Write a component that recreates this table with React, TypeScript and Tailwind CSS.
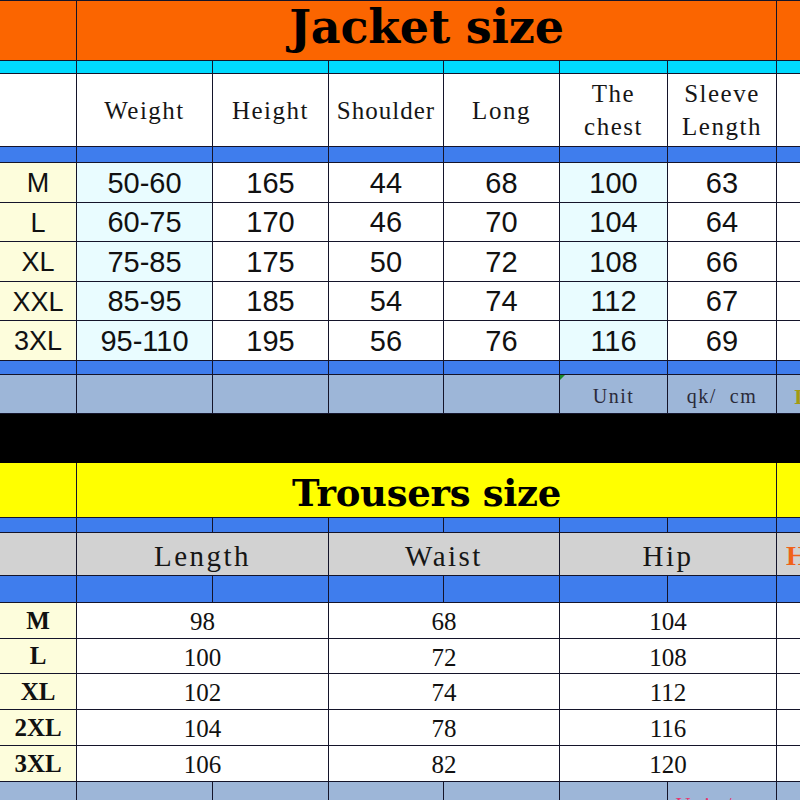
import React from 'react';

type Cell = {
  text?: React.ReactNode;
  span?: number;
  bg: string;
  className?: string;
};

const cols = 'grid grid-cols-[77px_136px_116px_115px_116px_108px_109px_23px]';

// one spreadsheet row, every cell gets a right + bottom rule
function Row({ cells, h }: { cells: Cell[]; h: string }) {
  return (
    <div className={`${cols} ${h}`}>
      {cells.map((c, i) => (
        <div
          key={i}
          className={`${c.bg} ${c.span === 2 ? 'col-span-2' : ''} ${c.span === 6 ? 'col-span-6' : ''} ${
            i === cells.length - 1 ? '' : 'border-r'
          } border-b border-[#14142a] flex items-center justify-center overflow-hidden relative ${c.className ?? ''}`}
        >
          {c.text}
        </div>
      ))}
    </div>
  );
}

const fill = (bg: string): Cell[] => Array.from({ length: 8 }, () => ({ bg }));

const jacket = [
  ['M', '50-60', '165', '44', '68', '100', '63'],
  ['L', '60-75', '170', '46', '70', '104', '64'],
  ['XL', '75-85', '175', '50', '72', '108', '66'],
  ['XXL', '85-95', '185', '54', '74', '112', '67'],
  ['3XL', '95-110', '195', '56', '76', '116', '69'],
];
const jacketHeights = ['h-[40px]', 'h-[39px]', 'h-[40px]', 'h-[39px]', 'h-[40px]'];

const trousers = [
  ['M', '98', '68', '104'],
  ['L', '100', '72', '108'],
  ['XL', '102', '74', '112'],
  ['2XL', '104', '78', '116'],
  ['3XL', '106', '82', '120'],
];
const trouserHeights = ['h-[36px]', 'h-[35px]', 'h-[36px]', 'h-[36px]', 'h-[36px]'];

const sans = "font-['Liberation_Sans',Arial,sans-serif]";
const serif = "font-['Liberation_Serif','Times_New_Roman',serif]";

export default function App() {
  const head = `${serif} text-[25px] tracking-[1.5px] text-[#161616] leading-[33px] text-center`;
  const lightCyan = 'bg-[#e9fcff]';
  const lightYellow = 'bg-[#fdfddc]';

  return (
    <div className="w-[800px] h-[800px] overflow-hidden bg-white border-t border-[#14142a]">
      {/* ---------- Jacket ---------- */}
      <Row
        h="h-[60px]"
        cells={[
          { bg: 'bg-[#fb6500]' },
          {
            bg: 'bg-[#fb6500]',
            span: 6,
            className: 'items-start',
            text: (
              <span className="font-['DejaVu_Serif',serif] font-bold text-[46px] leading-[52px] text-black tracking-[-0.2px]">
                Jacket size
              </span>
            ),
          },
          { bg: 'bg-[#fb6500]' },
        ]}
      />
      <Row h="h-[13px]" cells={fill('bg-[#00daff]')} />
      <Row
        h="h-[73px]"
        cells={[
          { bg: 'bg-white' },
          { bg: 'bg-white', text: <span className={head}>Weight</span> },
          { bg: 'bg-white', text: <span className={head}>Height</span> },
          { bg: 'bg-white', text: <span className={`${head} tracking-[1px]`}>Shoulder</span> },
          { bg: 'bg-white', text: <span className={head}>Long</span> },
          {
            bg: 'bg-white',
            text: (
              <span className={head}>
                The
                <br />
                chest
              </span>
            ),
          },
          {
            bg: 'bg-white',
            text: (
              <span className={head}>
                Sleeve
                <br />
                Length
              </span>
            ),
          },
          { bg: 'bg-white' },
        ]}
      />
      <Row h="h-[16px]" cells={fill('bg-[#3f7ded]')} />
      {jacket.map((r, ri) => (
        <Row
          key={r[0]}
          h={jacketHeights[ri]}
          cells={[
            { bg: lightYellow, text: <span className={`${sans} text-[27px] text-[#111] pt-[2px]`}>{r[0]}</span> },
            ...r.slice(1).map((v, i) => ({
              bg: i === 0 || i === 4 ? lightCyan : 'bg-white',
              text: <span className={`${sans} text-[29px] text-[#111] pt-[2px]`}>{v}</span>,
            })),
            { bg: 'bg-white' },
          ]}
        />
      ))}
      <Row h="h-[14px]" cells={fill('bg-[#3f7ded]')} />
      <Row
        h="h-[39px]"
        cells={[
          { bg: 'bg-[#9db6d8]' },
          { bg: 'bg-[#9db6d8]' },
          { bg: 'bg-[#9db6d8]' },
          { bg: 'bg-[#9db6d8]' },
          { bg: 'bg-[#9db6d8]' },
          {
            bg: 'bg-[#9db6d8]',
            text: (
              <>
                <span className="absolute left-0 top-0 w-0 h-0 border-t-[5px] border-r-[5px] border-t-[#1c8a2c] border-r-transparent" />
                <span className={`${serif} text-[20px] tracking-[1.5px] text-[#2a2a3a] pt-[4px]`}>Unit</span>
              </>
            ),
          },
          {
            bg: 'bg-[#9db6d8]',
            text: <span className={`${serif} text-[20px] tracking-[1.5px] text-[#2a2a3a] pt-[4px] whitespace-pre`}>qk/  cm</span>,
          },
          {
            bg: 'bg-[#9db6d8]',
            className: 'justify-start',
            text: <span className={`${serif} font-bold text-[22px] text-[#a59a10] pl-[17px] pt-[4px]`}>I</span>,
          },
        ]}
      />
      <div className="h-[49px] bg-black" />

      {/* ---------- Trousers ---------- */}
      <Row
        h="h-[55px]"
        cells={[
          { bg: 'bg-[#ffff00]' },
          {
            bg: 'bg-[#ffff00]',
            span: 6,
            text: (
              <span className="font-['DejaVu_Serif',serif] font-bold text-[37px] leading-none text-black pt-[6px] tracking-[-0.3px]">
                Trousers size
              </span>
            ),
          },
          { bg: 'bg-[#ffff00]' },
        ]}
      />
      <Row h="h-[15px]" cells={fill('bg-[#3f7ded]')} />
      <Row
        h="h-[43px]"
        cells={[
          { bg: 'bg-[#d2d2d2]' },
          { bg: 'bg-[#d2d2d2]', span: 2, text: <span className={`${serif} text-[29px] tracking-[2.5px] text-[#161616] pt-[6px]`}>Length</span> },
          { bg: 'bg-[#d2d2d2]', span: 2, text: <span className={`${serif} text-[29px] tracking-[2.5px] text-[#161616] pt-[6px]`}>Waist</span> },
          { bg: 'bg-[#d2d2d2]', span: 2, text: <span className={`${serif} text-[29px] tracking-[2.5px] text-[#161616] pt-[6px]`}>Hip</span> },
          {
            bg: 'bg-[#d2d2d2]',
            className: 'justify-start',
            text: <span className={`${serif} font-bold text-[28px] text-[#f0621a] pl-[9px] pt-[4px]`}>H</span>,
          },
        ]}
      />
      <Row h="h-[27px]" cells={fill('bg-[#3f7ded]')} />
      {trousers.map((r, ri) => (
        <Row
          key={r[0]}
          h={trouserHeights[ri]}
          cells={[
            { bg: lightYellow, text: <span className={`${serif} font-bold text-[25px] text-[#111]`}>{r[0]}</span> },
            { bg: 'bg-white', span: 2, text: <span className={`${serif} text-[25px] text-[#111] pt-[3px]`}>{r[1]}</span> },
            { bg: 'bg-white', span: 2, text: <span className={`${serif} text-[25px] text-[#111] pt-[3px]`}>{r[2]}</span> },
            { bg: 'bg-white', span: 2, text: <span className={`${serif} text-[25px] text-[#111] pt-[3px]`}>{r[3]}</span> },
            { bg: 'bg-white' },
          ]}
        />
      ))}
      <Row
        h="h-[40px]"
        cells={[
          { bg: 'bg-[#9db6d8]' },
          { bg: 'bg-[#9db6d8]' },
          { bg: 'bg-[#9db6d8]' },
          { bg: 'bg-[#9db6d8]' },
          { bg: 'bg-[#9db6d8]' },
          { bg: 'bg-[#9db6d8]' },
          {
            bg: 'bg-[#9db6d8]',
            className: 'items-start',
            text: <span className={`${serif} text-[21px] tracking-[1.5px] text-[#e8336c] pt-[8px] whitespace-pre`}>Unit / cm</span>,
          },
          { bg: 'bg-[#9db6d8]' },
        ]}
      />
    </div>
  );
}
